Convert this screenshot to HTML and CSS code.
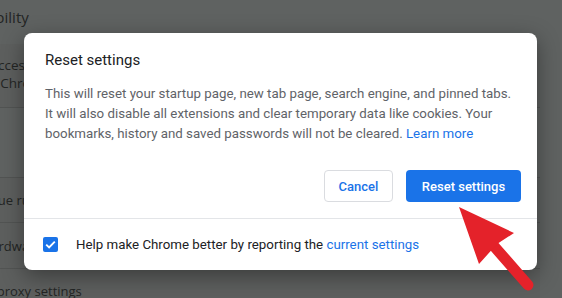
FILE: index.html
```html
<!DOCTYPE html>
<html>
<head>
<meta charset="utf-8">
<link rel="stylesheet" href="styles.css">
</head>
<body>
<div class="page">
  <div class="section-title">Accessibility</div>
  <div class="card">
    <div class="row two-line">
      <div class="line">Add accessibility features</div>
      <div class="line">Open Chrome Web Store</div>
    </div>
  </div>
  <div class="section-gap">System</div>
  <div class="card bordered">
    <div class="row">Continue running background apps when Google Chrome is closed</div>
    <div class="row">Use hardware acceleration when available</div>
    <div class="row">Open proxy settings</div>
  </div>
</div>

<div class="dialog">
  <div class="dialog-body">
    <div class="title">Reset settings</div>
    <p class="text">This will reset your startup page, new tab page, search engine, and pinned tabs. It will also disable all extensions and clear temporary data like cookies. Your bookmarks, history and saved passwords will not be cleared. <a class="link">Learn more</a></p>
    <div class="actions">
      <button class="btn cancel">Cancel</button>
      <button class="btn primary">Reset settings</button>
    </div>
  </div>
  <div class="footer">
    <span class="checkbox">
      <svg width="15" height="15" viewBox="0 0 15 15"><path d="M3.2 7.6 L6.1 10.4 L11.8 4.6" fill="none" stroke="#fff" stroke-width="1.9"/></svg>
    </span>
    <span class="footer-text">Help make Chrome better by reporting the <a class="link">current settings</a></span>
  </div>
</div>

<svg class="arrow" width="562" height="298" viewBox="0 0 562 298">
  <line x1="493" y1="245" x2="528" y2="285" stroke="#e4222a" stroke-width="11" stroke-linecap="round"/>
  <polygon points="459,207 514,233 497,244 479,264" fill="#e4222a"/>
</svg>
</body>
</html>
```
FILE: styles.css
```css
* { box-sizing: border-box; }
body {
  margin: 0;
  width: 562px;
  height: 298px;
  overflow: hidden;
  position: relative;
  background: #5f6261;
  font-family: Roboto, "Liberation Sans", sans-serif;
}
.page {
  margin-left: -58px;
  width: 598px;
  font-family: "Open Sans", "Liberation Sans", sans-serif;
  color: #232524;
}
.section-title {
  height: 44px;
  padding-top: 7px;
  padding-left: 3px;
  font-size: 15px;
  line-height: 20px;
}
.card {
  background: #5d5f5e;
}
.row {
  padding-left: 20px;
  font-size: 13.5px;
  height: 45px;
  line-height: 45px;
  white-space: nowrap;
  border-bottom: 1px solid #525453;
}
.row.two-line {
  height: 64px;
  line-height: 18px;
  padding-top: 12px;
}
.section-gap {
  height: 69px;
  padding-top: 36px;
  font-size: 15px;
}
.card.bordered { border-top: 1px solid #525453; }
.card.bordered .row { padding-left: 16px; font-size: 13px; }
.card.bordered .row:nth-child(2) { height: 46px; line-height: 46px; padding-left: 15px; }
.card.bordered .row:nth-child(3) { padding-left: 18px; }

.dialog {
  position: absolute;
  left: 24px;
  top: 33px;
  width: 513px;
  height: 237px;
  background: #fff;
  border-radius: 8px;
  box-shadow: 0 6px 22px rgba(0, 0, 0, 0.38);
  display: flex;
  flex-direction: column;
}
.dialog-body {
  padding: 17px 16px 0 21px;
}
.title {
  font-size: 15px;
  line-height: 20px;
  color: #202124;
}
.text {
  margin: 14px 0 0;
  padding-right: 5px;
  font-size: 13.3px;
  line-height: 20px;
  color: #5f6368;
}
.link { color: #1a73e8; text-decoration: none; }
.actions {
  display: flex;
  justify-content: flex-end;
  gap: 13px;
  margin-top: 26px;
}
.btn {
  height: 32px;
  font-family: Roboto, "Liberation Sans", sans-serif;
  font-size: 13px;
  font-weight: 500;
  border-radius: 4px;
  padding: 0;
}
.cancel {
  width: 69px;
  background: #fff;
  color: #1a73e8;
  border: 1px solid #dadce0;
}
.primary {
  width: 115px;
  background: #1a73e8;
  color: #fff;
  border: none;
}
.footer {
  margin-top: 16px;
  border-top: 1px solid #e3e5e8;
  flex: 1;
  display: flex;
  align-items: center;
  padding-left: 19px;
  gap: 18px;
}
.checkbox {
  width: 15px;
  height: 15px;
  border-radius: 2px;
  background: #1a73e8;
  display: flex;
}
.footer-text {
  font-size: 13.3px;
  color: #202124;
}
.arrow {
  position: absolute;
  left: 0;
  top: 0;
}
```
